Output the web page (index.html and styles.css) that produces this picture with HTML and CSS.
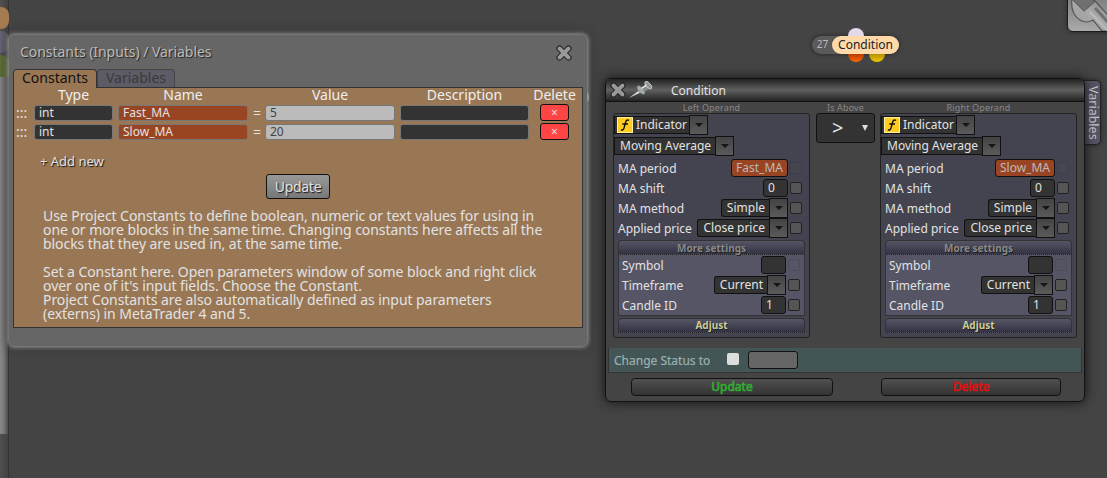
FILE: index.html
```
<!DOCTYPE html>
<html lang="en">
<head>
    <meta charset="UTF-8">
    <title>Condition</title>
    <link rel="stylesheet" href="styles.css">
</head>
<body>

    <!-- Left edge of the workspace -->
    <div class="side-strip">
        <i class="side-tab tan"></i>
        <i class="side-tab violet"></i>
        <i class="side-tab green"></i>
        <i class="side-bar"></i>
    </div>

    <div class="corner-tool">
        <svg width="42" height="31" viewBox="0 0 42 31">
            <defs>
                <linearGradient id="metal" x1="0" y1="1" x2="1" y2="0">
                    <stop offset="0" stop-color="#999"/>
                    <stop offset=".5" stop-color="#aaa"/>
                    <stop offset="1" stop-color="#777"/>
                </linearGradient>
            </defs>
            <path d="M4 -2 Q2 14 12 20 Q18 24 25 20 L34 31 L46 31 L46 22 L28 2 L24 -2 L26 2 L16 11 L5 0 Z" fill="url(#metal)" stroke="#555" stroke-width="1.2"/>
            <path d="M5 -1 L16 11 L26 2 L23 -1 Z" fill="#707070"/>
            <path d="M22 12 L40 31" stroke="#bbb" stroke-width="2"/>
            <path d="M27 8 L46 29" stroke="#707070" stroke-width="3"/>
        </svg>
    </div>

    <div class="edge-knob"></div>

    <!-- Constants window -->
    <div class="window constants">
        <div class="title">
            <span>Constants (Inputs) / Variables</span>
            <svg class="close" width="18" height="18" viewBox="0 0 18 18">
                <path class="x-edge" d="M4.5 4.5 L13.5 13.5 M13.5 4.5 L4.5 13.5"/>
                <path class="x-fill" d="M4.5 4.5 L13.5 13.5 M13.5 4.5 L4.5 13.5"/>
            </svg>
        </div>
        <div class="tabs">
            <span class="tab active">Constants</span>
            <span class="tab">Variables</span>
        </div>
        <div class="panel">
            <div class="row head">
                <span></span><span>Type</span><span>Name</span><span></span><span>Value</span><span>Description</span><span>Delete</span>
            </div>
            <div class="row">
                <span class="grip">:::</span><span class="field">int</span><span class="field name">Fast_MA</span><span class="eq">=</span><span class="field value">5</span><span class="field"></span><span class="del">×</span>
            </div>
            <div class="row">
                <span class="grip">:::</span><span class="field">int</span><span class="field name">Slow_MA</span><span class="eq">=</span><span class="field value">20</span><span class="field"></span><span class="del">×</span>
            </div>
            <div class="add">+ Add new</div>
            <div class="save">Update</div>
            <p class="help">
                Use Project Constants to define boolean, numeric or text values for using in<br>
                one or more blocks in the same time. Changing constants here affects all the<br>
                blocks that they are used in, at the same time.<br>
                <br>
                Set a Constant here. Open parameters window of some block and right click<br>
                over one of it's input fields. Choose the Constant.<br>
                Project Constants are also automatically defined as input parameters<br>
                (externs) in MetaTrader 4 and 5.
            </p>
        </div>
    </div>

    <!-- Block on the canvas -->
    <div class="block">
        <i class="dot in"></i>
        <i class="dot out-a"></i>
        <i class="dot out-b"></i>
        <span class="block-id">27</span>
        <span class="block-name">Condition</span>
    </div>

    <!-- Condition window -->
    <div class="side-label">Variables</div>
    <div class="window condition">
        <div class="bar">
            <svg class="close" width="18" height="18" viewBox="0 0 18 18">
                <path class="x-edge" d="M4.5 4.5 L13.5 13.5 M13.5 4.5 L4.5 13.5"/>
                <path class="x-fill" d="M4.5 4.5 L13.5 13.5 M13.5 4.5 L4.5 13.5"/>
            </svg>
            <svg class="pin" width="24" height="18" viewBox="0 0 24 18">
                <path d="M0 17 L10 9.5 L11.5 11.5 Z" fill="#ddd"/>
                <path d="M11 8 L17 3 L21 7 L15 11 Z" fill="#8a9092"/>
                <ellipse cx="12" cy="9" rx="2.6" ry="5.4" transform="rotate(-42 12 9)" fill="#a4aaac" stroke="#666" stroke-width=".6"/>
                <ellipse cx="19.3" cy="4.2" rx="2.2" ry="4.6" transform="rotate(-42 19.3 4.2)" fill="#8f9698" stroke="#c8cccc" stroke-width=".9"/>
                <path d="M12.5 7.5 L17.5 4" stroke="#eee" stroke-width="1.3"/>
            </svg>
            <span>Condition</span>
        </div>
        <div class="operands">
            <div class="operand">
                <div class="caption">Left Operand</div>
                <div class="box">
                    <div class="select kind"><span><svg class="fx" width="16" height="16" viewBox="0 0 16 16"><rect class="fx-bg" x=".5" y=".5" width="15" height="15"/><path d="M12 3.5 Q9.5 2 8.7 5 L7 11 Q6 14 4 12.7 M5.3 7 H11" /></svg>Indicator</span><b></b></div>
                    <div class="select model"><span>Moving Average</span><b></b></div>
                    <div class="params">
                        <div class="param"><label>MA period</label><span class="input const">Fast_MA</span><i class="check off"></i></div>
                        <div class="param"><label>MA shift</label><span class="input num">0</span><i class="check"></i></div>
                        <div class="param"><label>MA method</label><div class="select"><span>Simple</span><b></b></div><i class="check"></i></div>
                        <div class="param"><label>Applied price</label><div class="select"><span>Close price</span><b></b></div><i class="check"></i></div>
                    </div>
                    <div class="section">More settings</div>
                    <div class="more">
                        <div class="param"><label>Symbol</label><span class="input num"></span><i class="check off"></i></div>
                        <div class="param"><label>Timeframe</label><div class="select"><span>Current</span><b></b></div><i class="check"></i></div>
                        <div class="param"><label>Candle ID</label><span class="input num">1</span><i class="check"></i></div>
                    </div>
                    <div class="section adjust">Adjust</div>
                </div>
            </div>
            <div class="operator">
                <div class="caption">Is Above</div>
                <div class="compare"><span>&gt;</span><b></b></div>
            </div>
            <div class="operand">
                <div class="caption">Right Operand</div>
                <div class="box">
                    <div class="select kind"><span><svg class="fx" width="16" height="16" viewBox="0 0 16 16"><rect class="fx-bg" x=".5" y=".5" width="15" height="15"/><path d="M12 3.5 Q9.5 2 8.7 5 L7 11 Q6 14 4 12.7 M5.3 7 H11" /></svg>Indicator</span><b></b></div>
                    <div class="select model"><span>Moving Average</span><b></b></div>
                    <div class="params">
                        <div class="param"><label>MA period</label><span class="input const">Slow_MA</span><i class="check off"></i></div>
                        <div class="param"><label>MA shift</label><span class="input num">0</span><i class="check"></i></div>
                        <div class="param"><label>MA method</label><div class="select"><span>Simple</span><b></b></div><i class="check"></i></div>
                        <div class="param"><label>Applied price</label><div class="select"><span>Close price</span><b></b></div><i class="check"></i></div>
                    </div>
                    <div class="section">More settings</div>
                    <div class="more">
                        <div class="param"><label>Symbol</label><span class="input num"></span><i class="check off"></i></div>
                        <div class="param"><label>Timeframe</label><div class="select"><span>Current</span><b></b></div><i class="check"></i></div>
                        <div class="param"><label>Candle ID</label><span class="input num">1</span><i class="check"></i></div>
                    </div>
                    <div class="section adjust">Adjust</div>
                </div>
            </div>
        </div>
        <div class="status">
            <span>Change Status to</span>
            <i class="status-check"></i>
            <i class="status-input"></i>
        </div>
        <div class="actions">
            <div class="action update">Update</div>
            <div class="action delete">Delete</div>
        </div>
    </div>

</body>
</html>
```
FILE: styles.css
```
* {
    box-sizing: border-box;
}

body {
    margin: 0;
    height: 478px;
    position: relative;
    overflow: hidden;
    background: #444;
    font-family: "Noto Sans", sans-serif;
    font-size: 12px;
    color: #e2e2e2;
}

/* Workspace edge */
.side-strip {
    position: absolute;
    left: 0;
    top: 0;
    width: 9px;
    height: 478px;
    padding-top: 7px;
    border-right: 1px solid #333;
    background: linear-gradient(90deg, #505050, #424242);
}

.side-tab {
    display: block;
    width: 9px;
    height: 22px;
    margin-bottom: 2px;
    border-radius: 0 8px 8px 0;
}

.side-tab.tan { background: #a57b50; }
.side-tab.violet { background: linear-gradient(90deg, #66647a, #555); }
.side-tab.green { background: #5d7038; border-radius: 0 8px 0 0; }

.side-bar {
    display: block;
    height: 357px;
    margin-top: -2px;
    background: linear-gradient(90deg, #888, #777 50%, #4c4c4c);
}

.corner-tool {
    position: absolute;
    left: 1067px;
    top: -8px;
    width: 52px;
    height: 40px;
    padding-top: 7px;
    border: 1px solid #1c1c1c;
    border-radius: 6px;
    background: linear-gradient(#777, #aaa);
    box-shadow: 0 0 4px #222;
    overflow: hidden;
}

.edge-knob {
    position: absolute;
    left: 579px;
    top: 91px;
    width: 10px;
    height: 12px;
    border-radius: 6px;
    background: #ccc;
}

/* Windows */
.window {
    position: absolute;
}

.close .x-edge,
.close .x-fill {
    fill: none;
    stroke: #1c1c1c;
    stroke-width: 6;
    stroke-linecap: round;
}

.close .x-fill {
    stroke: #999;
    stroke-width: 4;
}

.constants {
    left: 9px;
    top: 35px;
    width: 578px;
    height: 311px;
    padding: 0 4px;
    border-radius: 5px;
    background: #666;
    box-shadow: 0 0 5px 1px #aaa, 0 0 12px #222;
}

.title {
    height: 34px;
    display: flex;
    justify-content: space-between;
    align-items: center;
    padding: 0 10px 2px 7px;
    font-size: 14px;
    letter-spacing: -.05px;
    color: #bbb;
    text-shadow: 1px 1px 1px #222;
}

.title .close {
    margin-top: 3px;
}

.tabs {
    display: flex;
    height: 18px;
}

.tab {
    height: 18px;
    padding: 0 8px;
    border: 1px solid #444;
    border-bottom: 0;
    border-radius: 4px 4px 0 0;
    background: #5c5b66;
    color: #3a3a3a;
    font-size: 14px;
    line-height: 16px;
}

.tab.active {
    height: 19px;
    z-index: 1;
    border-color: #333;
    background: #997755;
    color: #111;
}

.panel {
    height: 241px;
    border: 1px solid #333;
    background: #997755;
}

.row {
    display: grid;
    grid-template-columns: 12px 79px 130px 7px 130px 129px 41px;
    column-gap: 5px;
    height: 19px;
    padding-left: 3px;
    align-items: center;
}

.row.head {
    height: 15px;
    font-size: 14px;
    line-height: 14px;
    text-align: center;
    color: #eee;
    align-items: start;
}

.row.head span {
    justify-self: center;
}

.field {
    height: 16px;
    padding-left: 4px;
    border: 1px solid #777;
    border-radius: 3px;
    background: #333;
    font-size: 12px;
    line-height: 14px;
}

.field.name { background: #994422; }
.field.value { background: #bbb; color: #444; }

.grip, .eq {
    font-size: 14px;
    line-height: 14px;
}

.grip {
    margin-left: -1px;
}

.del {
    width: 29px;
    height: 17px;
    justify-self: center;
    border: 1px solid #111;
    border-radius: 3px;
    background: #ff4444;
    line-height: 15px;
    text-align: center;
}

.add {
    margin: 12px 0 0 26px;
    font-size: 13px;
    line-height: 16px;
    text-shadow: 1px 1px 1px #111;
}

.save {
    width: 64px;
    height: 25px;
    margin: 5px 0 0 252px;
    border: 1px solid #111;
    border-radius: 3px;
    background: linear-gradient(#999, #777);
    font-size: 14px;
    letter-spacing: -.3px;
    line-height: 23px;
    text-align: center;
    text-shadow: 1px 1px 1px #111;
}

.help {
    margin: 10px 0 0 29px;
    font-size: 14px;
    letter-spacing: -.06px;
    line-height: 14px;
    white-space: nowrap;
}

/* Canvas block */
.block {
    position: absolute;
    left: 812px;
    top: 36px;
    width: 87px;
    height: 18px;
    display: flex;
    border-radius: 9px;
    background: #5a5a5a;
    box-shadow: 0 0 4px #222;
}

.block-id {
    width: 20px;
    padding-left: 1px;
    font-size: 10px;
    line-height: 17px;
    text-align: center;
    color: #bbb;
}

.block-name {
    position: relative;
    width: 67px;
    border-radius: 9px;
    background: #ffd9a8;
    color: #222;
    line-height: 18px;
    text-align: center;
}

.dot {
    position: absolute;
    width: 16px;
    height: 16px;
    border-radius: 50%;
}

.dot.in { left: 36px; top: -8px; background: #e4d8ea; }
.dot.out-a { left: 36px; top: 10px; background: linear-gradient(#b33c00 50%, #ff6600); }
.dot.out-b { left: 57px; top: 10px; background: linear-gradient(#b38f00 50%, #f2c800); }

/* Condition window */
.side-label {
    position: absolute;
    left: 1080px;
    top: 80px;
    width: 21px;
    height: 65px;
    border: 1px solid #222;
    border-radius: 5px;
    background: #555566;
    color: #ccc;
    box-shadow: 0 0 4px #222;
    writing-mode: vertical-rl;
    font-size: 12.5px;
    line-height: 14px;
    padding-top: 5px;
}

.condition {
    left: 605px;
    top: 78px;
    width: 480px;
    height: 324px;
    border: 1px solid #111;
    border-radius: 6px;
    background: #444;
    box-shadow: 0 0 12px #111;
}

.bar {
    display: flex;
    align-items: center;
    height: 23px;
    padding-left: 3px;
    border-bottom: 1px solid #111;
    border-radius: 5px 5px 0 0;
    background: linear-gradient(#222, #606060 50%, #222);
}

.pin {
    margin: -1px 18px 0 2px;
}

.operands {
    display: flex;
    gap: 6px;
    padding-left: 7px;
}

.operand {
    width: 197px;
}

.operator {
    width: 59px;
    margin-right: -1px;
}

.caption {
    height: 11px;
    font-size: 9px;
    letter-spacing: .15px;
    line-height: 11px;
    text-align: center;
    color: #888;
}

.box {
    height: 225px;
    padding: 1px 4px;
    border: 1px solid #222;
    border-radius: 3px;
    background: #444450;
}

.select {
    display: flex;
    align-items: center;
    width: max-content;
}

.select span {
    display: flex;
    align-items: center;
    height: 18px;
    padding: 0 4px 0 5px;
    border: 1px solid #111;
    border-right: 0;
    border-radius: 3px 0 0 3px;
    background: #333;
    line-height: 16px;
}

.select b {
    display: flex;
    width: 19px;
    height: 20px;
    align-items: center;
    justify-content: center;
    border: 1px solid #111;
    background: linear-gradient(#444, #5a5a5a);
}

.select b::after {
    content: "";
    border: 4px solid transparent;
    border-top-color: #151515;
    border-bottom: 0;
}

.select.kind, .select.model {
    margin-left: -4px;
}

.select.kind span { padding: 0 2px 0 2px; border-radius: 0; }
.select.model { margin-top: 1px; }
.select.model span { border-radius: 0; }

.fx {
    margin-right: 3px;
}

.fx-bg {
    fill: #ffcc22;
    stroke: #fff0a0;
}

.fx path {
    fill: none;
    stroke: #111;
    stroke-width: 1.4;
}

.params {
    padding-top: 2px;
}

.param {
    display: flex;
    align-items: center;
    height: 20px;
    padding-right: 3px;
}

.param label {
    flex: 1;
}

.input {
    height: 18px;
    padding: 0 4px;
    border: 1px solid #111;
    border-radius: 3px;
    background: #333;
    line-height: 16px;
}

.input.const {
    background: #994422;
    color: #bbb;
}

.input.num {
    width: 25px;
}

.check {
    width: 12px;
    height: 12px;
    margin-left: 2px;
    border: 1px solid #222;
    border-radius: 2px;
    background: #555;
}

.check.off {
    opacity: .15;
}

.section {
    height: 15px;
    margin-top: 2px;
    border: 1px solid #333;
    border-bottom: 1px dotted #222;
    border-radius: 4px 4px 0 0;
    background: linear-gradient(#555566, #333344);
    font-size: 10px;
    font-weight: bold;
    line-height: 14px;
    text-align: center;
    color: #888;
    text-shadow: 1px 1px 0 #222;
}

.section.adjust {
    color: #cccc99;
    line-height: 13px;
}

.more {
    height: 61px;
    padding: 0 0 0 3px;
    border: 1px solid #333;
    border-top: 0;
    background: #555566;
}

.more .param {
    padding-right: 4px;
}

.compare {
    display: flex;
    align-items: center;
    justify-content: space-between;
    height: 30px;
    padding: 0 6px 0 15px;
    border: 1px solid #111;
    border-radius: 3px;
    background: #333;
    font-size: 20px;
    line-height: 24px;
}

.compare b {
    border: 3px solid transparent;
    border-top: 6px solid #ddd;
    border-bottom: 0;
}

.status {
    display: flex;
    align-items: center;
    height: 25px;
    margin: 10px 2px 0 2px;
    padding-left: 5px;
    border: 1px solid #333;
    border-top: 0;
    background: #445555;
    color: #9ab0b0;
    -webkit-text-stroke: .2px;
}

.status-check {
    width: 12px;
    height: 12px;
    margin: -2px 9px 0 17px;
    border-radius: 2px;
    background: #ddd;
}

.status-input {
    width: 50px;
    height: 18px;
    border: 1px solid #111;
    border-radius: 3px;
    background: #666;
}

.actions {
    display: flex;
    gap: 48px;
    margin: 5px 0 0 25px;
}

.action {
    width: 202px;
    height: 18px;
    border: 1px solid #111;
    border-radius: 4px;
    background: linear-gradient(#505050, #333);
    line-height: 16px;
    text-align: center;
    -webkit-text-stroke: .7px;
}

.action.update { color: #33aa33; }
.action.delete { width: 180px; color: #dd1111; }
```
